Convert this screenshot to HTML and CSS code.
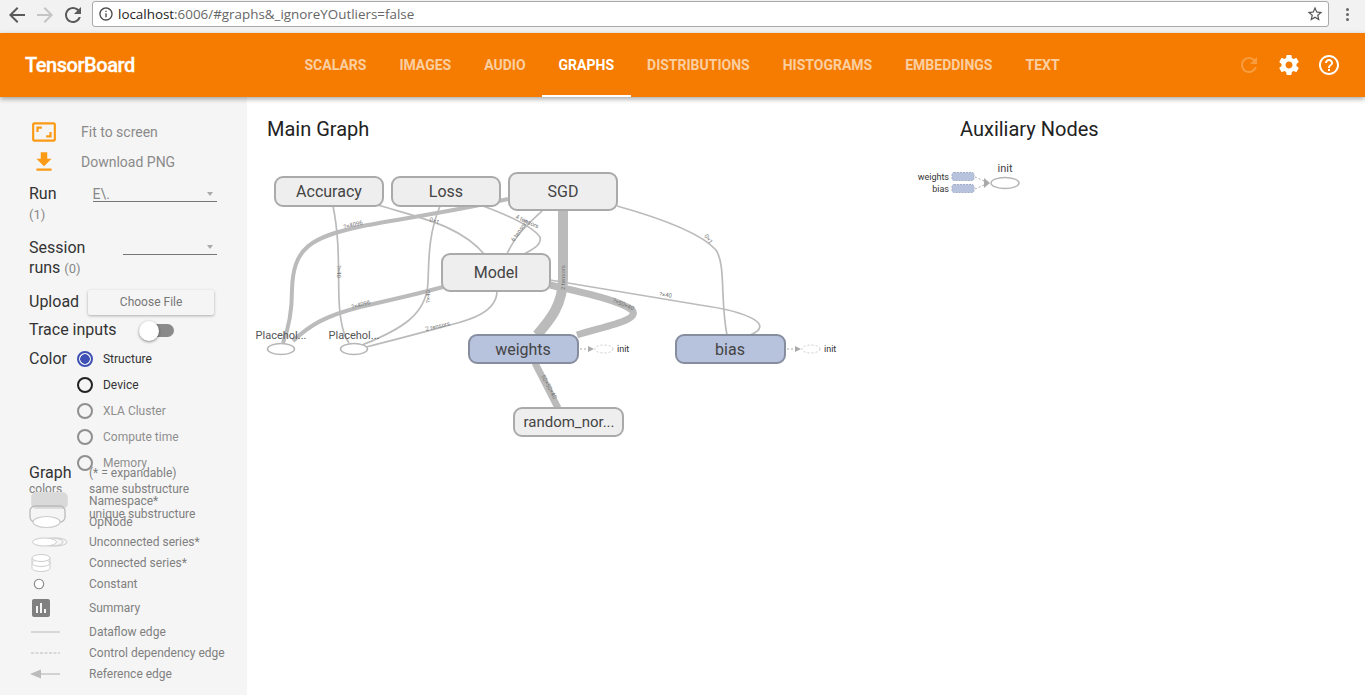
FILE: index.html
```html
<!DOCTYPE html>
<html lang="en">
<head>
  <meta charset="UTF-8" />
  <title>TensorBoard</title>
  <link rel="stylesheet" href="styles.css">
</head>
<body>

  <div class="chrome-bar">
    <svg class="chrome-icon" viewBox="0 0 24 24"><path d="M20 11H7.83l5.59-5.59L12 4l-8 8 8 8 1.41-1.41L7.83 13H20v-2z"/></svg>
    <svg class="chrome-icon faded" viewBox="0 0 24 24"><path d="M12 4l-1.41 1.41L16.17 11H4v2h12.17l-5.58 5.59L12 20l8-8z"/></svg>
    <svg class="chrome-icon" viewBox="0 0 24 24"><path d="M17.65 6.35C16.2 4.9 14.21 4 12 4c-4.42 0-7.99 3.58-7.99 8s3.57 8 7.99 8c3.73 0 6.84-2.55 7.73-6h-2.08c-.82 2.33-3.04 4-5.65 4-3.31 0-6-2.69-6-6s2.69-6 6-6c1.66 0 3.14.69 4.22 1.78L13 11h7V4l-2.35 2.35z"/></svg>
    <div class="address">
      <svg class="info-icon" viewBox="0 0 24 24"><path d="M11 17h2v-6h-2v6zm1-15C6.48 2 2 6.48 2 12s4.48 10 10 10 10-4.48 10-10S17.52 2 12 2zm0 18c-4.41 0-8-3.59-8-8s3.59-8 8-8 8 3.59 8 8-3.59 8-8 8zM11 9h2V7h-2v2z"/></svg>
      <span class="url"><b>localhost</b>:6006/#graphs&amp;_ignoreYOutliers=false</span>
      <svg class="star-icon" viewBox="0 0 24 24"><path d="M22 9.24l-7.19-.62L12 2 9.19 8.63 2 9.24l5.46 4.73L5.82 21 12 17.27 18.18 21l-1.63-7.03L22 9.24zM12 15.4l-3.76 2.27 1-4.28-3.32-2.88 4.38-.38L12 6.1l1.71 4.04 4.38.38-3.32 2.88 1 4.28L12 15.4z"/></svg>
    </div>
    <div class="menu-dots"><i></i><i></i><i></i></div>
  </div>

  <header class="toolbar">
    <div class="brand">TensorBoard</div>
    <nav class="tabs">
      <a>SCALARS</a>
      <a>IMAGES</a>
      <a>AUDIO</a>
      <a class="active">GRAPHS</a>
      <a>DISTRIBUTIONS</a>
      <a>HISTOGRAMS</a>
      <a>EMBEDDINGS</a>
      <a>TEXT</a>
    </nav>
    <div class="toolbar-icons">
      <svg class="faded" viewBox="0 0 24 24"><path d="M17.65 6.35C16.2 4.9 14.21 4 12 4c-4.42 0-7.99 3.58-7.99 8s3.57 8 7.99 8c3.73 0 6.84-2.55 7.73-6h-2.08c-.82 2.33-3.04 4-5.65 4-3.31 0-6-2.69-6-6s2.69-6 6-6c1.66 0 3.14.69 4.22 1.78L13 11h7V4l-2.35 2.35z"/></svg>
      <svg viewBox="0 0 24 24"><path d="M19.43 12.98c.04-.32.07-.64.07-.98s-.03-.66-.07-.98l2.11-1.65c.19-.15.24-.42.12-.64l-2-3.46c-.12-.22-.39-.3-.61-.22l-2.49 1c-.52-.4-1.08-.73-1.69-.98l-.38-2.65C14.46 2.18 14.25 2 14 2h-4c-.25 0-.46.18-.49.42l-.38 2.65c-.61.25-1.17.59-1.69.98l-2.49-1c-.23-.09-.49 0-.61.22l-2 3.46c-.13.22-.07.49.12.64l2.11 1.65c-.04.32-.07.65-.07.98s.03.66.07.98l-2.11 1.65c-.19.15-.24.42-.12.64l2 3.46c.12.22.39.3.61.22l2.49-1c.52.4 1.08.73 1.69.98l.38 2.65c.03.24.24.42.49.42h4c.25 0 .46-.18.49-.42l.38-2.65c.61-.25 1.17-.59 1.69-.98l2.49 1c.23.09.49 0 .61-.22l2-3.46c.12-.22.07-.49-.12-.64l-2.11-1.65zM12 15.5c-1.93 0-3.5-1.57-3.5-3.5s1.57-3.5 3.5-3.5 3.5 1.57 3.5 3.5-1.57 3.5-3.5 3.5z"/></svg>
      <svg viewBox="0 0 24 24"><path d="M11 18h2v-2h-2v2zm1-16C6.48 2 2 6.48 2 12s4.48 10 10 10 10-4.48 10-10S17.52 2 12 2zm0 18c-4.41 0-8-3.59-8-8s3.59-8 8-8 8 3.59 8 8-3.59 8-8 8zm0-14c-2.21 0-4 1.79-4 4h2c0-1.1.9-2 2-2s2 .9 2 2c0 2-3 1.75-3 5h2c0-2.25 3-2.5 3-5 0-2.21-1.79-4-4-4z"/></svg>
    </div>
  </header>

  <div class="content">
    <aside class="sidebar">
      <div class="action">
        <svg viewBox="0 0 24 24"><path d="M19 12h-2v3h-3v2h5v-5zM7 9h3V7H5v5h2V9zm14-6H3c-1.1 0-2 .9-2 2v14c0 1.1.9 2 2 2h18c1.1 0 2-.9 2-2V5c0-1.1-.9-2-2-2zm0 16.01H3V4.99h18v14.02z"/></svg>
        <span>Fit to screen</span>
      </div>
      <div class="action">
        <svg viewBox="0 0 24 24"><path d="M19 9h-4V3H9v6H5l7 7 7-7zM5 18v2h14v-2H5z"/></svg>
        <span>Download PNG</span>
      </div>

      <div class="field run-field">
        <div class="field-label">Run<br><small>(1)</small></div>
        <div class="select run-select">E\.<i class="caret"></i></div>
      </div>
      <div class="field session-field">
        <div class="field-label">Session<br>runs <small>(0)</small></div>
        <div class="select session-select"><i class="caret"></i></div>
      </div>
      <div class="field upload-field">
        <div class="field-label">Upload</div>
        <button class="file-btn">Choose File</button>
      </div>
      <div class="field trace-field">
        <div class="field-label">Trace inputs</div>
        <div class="toggle"><i></i></div>
      </div>

      <div class="color-field">
        <div class="field-label">Color</div>
        <div class="radios">
          <div class="radio checked"><i></i>Structure</div>
          <div class="radio dark"><i></i>Device</div>
          <div class="radio"><i></i>XLA Cluster</div>
          <div class="radio"><i></i>Compute time</div>
          <div class="radio"><i></i>Memory</div>
        </div>
      </div>

      <div class="key">
        <div class="key-row">
          <div class="key-head">Graph</div><span>(* = expandable)</span>
        </div>
        <div class="key-row gap-2">
          <div class="key-head small">colors</div><span>same substructure</span>
        </div>
        <div class="key-row gap-n2">
          <div class="key-icon"><svg width="60" height="20" viewBox="0 0 60 20"><rect x="2.5" y="1.5" width="36" height="16" rx="5" fill="#d9d9d9" stroke="#ddd"/></svg></div><span>Namespace*</span>
        </div>
        <div class="key-row gap-n1">
          <div class="key-icon"><svg width="60" height="20" viewBox="0 0 60 20"><rect x="1" y="2" width="35" height="16" rx="5" fill="none" stroke="#bbb" stroke-width="1.3"/></svg></div><span>unique substructure</span>
        </div>
        <div class="key-row gap-n6">
          <div class="key-icon"><svg width="60" height="16" viewBox="0 0 60 16"><ellipse cx="17.5" cy="8" rx="13.5" ry="5.5" fill="#fff" stroke="#ccc" stroke-width="1.2"/></svg></div><span>OpNode</span>
        </div>
        <div class="key-row gap-6">
          <div class="key-icon"><svg width="60" height="14" viewBox="0 0 60 14"><ellipse cx="27" cy="7" rx="11" ry="4" fill="#f5f5f5" stroke="#ccc"/><ellipse cx="23" cy="7" rx="11" ry="4" fill="#f5f5f5" stroke="#ccc"/><ellipse cx="15.5" cy="7" rx="12" ry="4" fill="#fff" stroke="#ccc"/></svg></div><span>Unconnected series*</span>
        </div>
        <div class="key-row gap-7">
          <div class="key-icon"><svg width="60" height="18" viewBox="0 0 60 18"><path d="M3 4v10c0 2 4 3.5 9 3.5s9-1.5 9-3.5V4" fill="#fff" stroke="#ccc"/><ellipse cx="12" cy="9" rx="9" ry="3.5" fill="#fff" stroke="#ccc"/><ellipse cx="12" cy="4" rx="9" ry="3.5" fill="#fff" stroke="#ccc"/></svg></div><span>Connected series*</span>
        </div>
        <div class="key-row gap-7">
          <div class="key-icon"><svg width="60" height="14" viewBox="0 0 60 14"><circle cx="10" cy="7" r="4.7" fill="#fff" stroke="#888" stroke-width="1.1"/></svg></div><span>Constant</span>
        </div>
        <div class="key-row gap-10">
          <div class="key-icon"><svg class="summary-icon" viewBox="3 3 18 18"><path d="M19 3H5c-1.1 0-2 .9-2 2v14c0 1.1.9 2 2 2h14c1.1 0 2-.9 2-2V5c0-1.1-.9-2-2-2zM9 17H7v-7h2v7zm4 0h-2V7h2v10zm4 0h-2v-4h2v4z"/></svg></div><span>Summary</span>
        </div>
        <div class="key-row gap-10">
          <div class="key-icon"><svg width="60" height="6" viewBox="0 0 60 6"><path d="M2 3h29" stroke="#bbb" stroke-width="1"/></svg></div><span>Dataflow edge</span>
        </div>
        <div class="key-row gap-7">
          <div class="key-icon"><svg width="60" height="6" viewBox="0 0 60 6"><path d="M2 3h29" stroke="#bbb" stroke-width="1" stroke-dasharray="3 1.5"/></svg></div><span>Control dependency edge</span>
        </div>
        <div class="key-row gap-7">
          <div class="key-icon"><svg width="60" height="10" viewBox="0 0 60 10"><path d="M10 5h21" stroke="#bbb" stroke-width="1.2"/><path d="M1 5l11-4.5v9z" fill="#bbb"/></svg></div><span>Reference edge</span>
        </div>
      </div>
    </aside>

    <main class="board">
      <svg class="graph" viewBox="247 97 1118 598">
        <text class="heading" x="267" y="136">Main Graph</text>
        <text class="heading" x="960" y="136">Auxiliary Nodes</text>

        <!-- edges -->
        <g class="edges">
          <path class="w4" d="M508 199C455 211 400 219 363 226C310 237 293 248 292 290C292 315 288 330 283 343"/>
          <path class="w4" d="M443 287C410 296 385 301 360 307C325 316 310 325 293 341"/>
          <path d="M333 206C340 240 338 270 339 300C340 320 343 335 349 343"/>
          <path d="M378 205C420 218 460 225 485 255"/>
          <path d="M440 206C428 235 429 260 428 282C427 315 400 330 362 345"/>
          <path d="M483 206C510 216 532 226 540 237C542 245 532 250 522 255"/>
          <path d="M543 210C530 222 515 235 507 254"/>
          <path d="M497 291C497 312 470 320 450 325C420 333 395 340 366 347"/>
          <path class="w10" d="M563 210V278C563 305 550 320 537 335"/>
          <path class="w7" d="M550 285C580 292 620 300 632 310C640 320 610 325 577 335"/>
          <path d="M550 280C600 288 650 297 700 305C750 312 775 325 750 335"/>
          <path d="M617 206C660 218 700 232 716 250C726 265 720 300 727 335"/>
          <path class="w7" d="M535 363L558 408"/>
        </g>

        <!-- small tensor shape labels sitting on the edges -->
        <g class="shapes">
          <text transform="translate(344 229) rotate(-14)">?×4096</text>
          <text transform="translate(337 265) rotate(90)">?×40</text>
          <text transform="translate(352 309) rotate(-15)">?×4096</text>
          <text transform="translate(430 303) rotate(-90)">?×40</text>
          <text transform="translate(429 221) rotate(20)">0×1</text>
          <text transform="translate(426 331) rotate(-13)">2 tensors</text>
          <text transform="translate(515 218) rotate(25)">4 tensors</text>
          <text transform="translate(514 242) rotate(-55)">6 tensors</text>
          <text transform="translate(565 290) rotate(-90)">2 tensors</text>
          <text transform="translate(612 302) rotate(22)">?×50×40</text>
          <text transform="translate(659 296) rotate(8)">?×40</text>
          <text transform="translate(704 236) rotate(55)">0×1</text>
          <text transform="translate(541 376) rotate(62)">50×50×40</text>
        </g>

        <!-- nodes -->
        <g class="node">
          <rect x="275" y="177" width="108" height="29" rx="8"/>
          <text x="329" y="197">Accuracy</text>
        </g>
        <g class="node">
          <rect x="392" y="177" width="108" height="29" rx="8"/>
          <text x="446" y="197">Loss</text>
        </g>
        <g class="node">
          <rect x="509" y="173" width="108" height="37" rx="8"/>
          <text x="563" y="197">SGD</text>
        </g>
        <g class="node">
          <rect x="442" y="254" width="108" height="37" rx="8"/>
          <text x="496" y="278">Model</text>
        </g>
        <g class="node blue">
          <rect x="469" y="335" width="109" height="28" rx="8"/>
          <text x="523" y="355">weights</text>
        </g>
        <g class="node blue">
          <rect x="676" y="335" width="109" height="28" rx="8"/>
          <text x="730" y="355">bias</text>
        </g>
        <g class="node narrow">
          <rect x="514" y="408" width="109" height="28" rx="8"/>
          <text x="569" y="427">random_nor...</text>
        </g>

        <!-- placeholders -->
        <g class="op">
          <ellipse cx="281" cy="349" rx="13.5" ry="5.5"/>
          <text x="281" y="339">Placehol...</text>
          <ellipse cx="354" cy="349" rx="13.5" ry="5.5"/>
          <text x="354" y="339">Placehol...</text>
        </g>

        <!-- init stubs next to the variables -->
        <g class="stub">
          <path d="M580 349h9"/><path class="tip" d="M588 346l6 3-6 3z"/>
          <ellipse cx="604" cy="349" rx="9" ry="4"/>
          <text x="617" y="352">init</text>
          <path d="M787 349h9"/><path class="tip" d="M795 346l6 3-6 3z"/>
          <ellipse cx="811" cy="349" rx="9" ry="4"/>
          <text x="824" y="352">init</text>
        </g>

        <!-- auxiliary nodes -->
        <g class="aux">
          <text x="949" y="180">weights</text>
          <text x="949" y="192">bias</text>
          <rect x="952" y="172.5" width="22" height="8" rx="2"/>
          <rect x="952" y="184.5" width="22" height="8" rx="2"/>
          <path class="link" d="M975 177l9 4M975 189l9-4"/>
          <path class="tip" d="M984 178l6 5-6 5z"/>
          <ellipse cx="1005" cy="183" rx="14" ry="5.5"/>
          <text class="aux-title" x="1005" y="172">init</text>
        </g>
      </svg>
    </main>
  </div>

</body>
</html>
```
FILE: styles.css
```css
* {
  box-sizing: border-box;
}

body {
  margin: 0;
  height: 695px;
  overflow: hidden;
  font-family: Roboto, 'Noto Sans', sans-serif;
  background: white;
  display: flex;
  flex-direction: column;
}

/* browser chrome */
.chrome-bar {
  height: 33px;
  flex: none;
  background: #f2f2f2;
  display: flex;
  align-items: flex-start;
  padding: 1px 0 0 5px;
}

.chrome-icon {
  width: 24px;
  height: 24px;
  margin: 2px 4px 0 0;
  fill: #5a5a5a;
}

.chrome-icon.faded {
  fill: #c4c4c4;
}

.address {
  width: 1237px;
  height: 26px;
  margin-left: 3px;
  background: white;
  border: 1px solid #a9a9a9;
  border-radius: 3px;
  display: flex;
  align-items: center;
  padding: 0 4px 0 5px;
}

.info-icon {
  width: 16px;
  height: 16px;
  fill: #4a4a4a;
}

.url {
  margin-left: 4px;
  font-family: 'Open Sans', sans-serif;
  font-size: 13.4px;
  color: #666;
  flex: 1;
}

.url b {
  font-weight: normal;
  color: #222;
}

.star-icon {
  width: 18px;
  height: 18px;
  fill: #555;
}

.menu-dots {
  margin: 7px 0 0 17px;
  display: flex;
  flex-direction: column;
  gap: 2px;
}

.menu-dots i {
  width: 3px;
  height: 3px;
  background: #666;
  border-radius: 50%;
}

/* orange toolbar */
.toolbar {
  height: 64px;
  flex: none;
  background: #f57c00;
  box-shadow: 0 2px 5px rgba(0, 0, 0, 0.35);
  display: flex;
  position: relative;
  z-index: 2;
  color: white;
}

.brand {
  width: 288px;
  padding-left: 25px;
  font-size: 20px;
  font-weight: 500;
  line-height: 65px;
  letter-spacing: -0.45px;
  -webkit-text-stroke: 0.3px white;
}

.tabs {
  display: flex;
  flex: 1;
}

.tabs a {
  padding: 0 16.5px;
  font-size: 14px;
  font-weight: 700;
  line-height: 65px;
  color: rgba(255, 255, 255, 0.65);
}

.tabs a.active {
  color: white;
  border-bottom: 2px solid white;
}

.toolbar-icons {
  display: flex;
  gap: 16px;
  align-items: center;
  padding-right: 24px;
}

.toolbar-icons svg {
  width: 24px;
  height: 24px;
  fill: white;
}

.toolbar-icons svg.faded {
  fill: rgba(255, 255, 255, 0.25);
}

/* left panel */
.content {
  flex: 1;
  display: flex;
  min-height: 0;
}

.sidebar {
  width: 247px;
  flex: none;
  background: #f5f5f5;
  padding: 20px 0 0 29px;
  font-size: 16px;
  color: #333;
}

.action {
  height: 30px;
  display: flex;
  align-items: center;
  font-size: 14px;
  color: #8a8a8a;
}

.action svg {
  width: 26px;
  height: 26px;
  margin: 0 24px 0 2px;
  fill: #fb9a14;
}

.field {
  display: flex;
}

.field-label {
  line-height: 20px;
  color: #333;
}

.field-label small {
  font-size: 13px;
  color: #888;
}

.run-field {
  height: 61px;
  padding-top: 7px;
}

.session-field {
  height: 47px;
}

.select {
  position: relative;
  height: 15px;
  margin-top: 3px;
  border-bottom: 1px solid #777;
  font-size: 14px;
  line-height: 14px;
  color: #888;
}

.run-select {
  width: 124px;
  margin-left: 36px;
}

.session-select {
  width: 94px;
  margin-left: 38px;
  margin-top: 2px;
}

/* dropdown arrow over the underline box */
.caret {
  position: absolute;
  right: 4px;
  top: 5px;
  border: 3.5px solid transparent;
  border-top: 4px solid #aaa;
}

.upload-field {
  height: 28px;
  margin-top: 3px;
  align-items: center;
}

.file-btn {
  width: 126px;
  height: 25px;
  margin-left: 9px;
  border: none;
  border-radius: 2px;
  background: #f5f5f5;
  box-shadow: 0 1px 3px rgba(0, 0, 0, 0.3);
  font-family: Roboto, sans-serif;
  font-size: 12px;
  color: #777;
}

.trace-field {
  height: 28px;
  align-items: center;
}

.toggle {
  position: relative;
  width: 24px;
  height: 13px;
  margin-left: 33px;
  border-radius: 7px;
  background: #8a8a8a;
}

/* knob hangs over the end of the track */
.toggle i {
  position: absolute;
  left: -11px;
  top: -3px;
  width: 20px;
  height: 20px;
  border-radius: 50%;
  background: white;
  box-shadow: 0 1px 3px rgba(0, 0, 0, 0.45);
}

.color-field {
  height: 122px;
  display: flex;
  line-height: 26px;
}

.color-field .field-label {
  line-height: 26px;
  margin-top: 2px;
}

.radios {
  margin-left: 10px;
  padding-top: 2px;
  font-size: 12px;
  color: #8f8f8f;
}

.radio {
  height: 26px;
  display: flex;
  align-items: center;
}

.radio i {
  width: 16px;
  height: 16px;
  margin-right: 10px;
  border: 2px solid #8f8f8f;
  border-radius: 50%;
}

.radio.dark {
  color: #333;
}

.radio.dark i {
  border-color: #222;
}

.radio.checked {
  color: #333;
}

.radio.checked i {
  border-color: #3f51b5;
  background: radial-gradient(circle, #3f51b5 0 4.5px, transparent 5px);
}

/* legend, rows deliberately run into each other like the original panel */
.key {
  font-size: 12px;
  color: #808080;
}

.key-row {
  height: 14px;
  display: flex;
  align-items: center;
  position: relative;
}

.key-head,
.key-icon {
  width: 60px;
  flex: none;
}

.key-head {
  margin-bottom: 2px;
  font-size: 16px;
  color: #333;
}

.key-head.small {
  margin-bottom: 0;
  font-size: 12px;
  color: #808080;
}

.key-icon {
  height: 14px;
  display: flex;
  align-items: center;
}

.key-icon svg {
  display: block;
  overflow: visible;
}

.summary-icon {
  width: 18px;
  height: 18px;
  margin-left: 3px;
  fill: #808080;
}

.gap-n6 { margin-top: -6px; }
.gap-n2 { margin-top: -2px; }
.gap-n1 { margin-top: -1px; }
.gap-2 { margin-top: 2px; }
.gap-6 { margin-top: 6px; }
.gap-7 { margin-top: 7px; }
.gap-10 { margin-top: 10px; }

/* graph canvas */
.board {
  flex: 1;
  min-width: 0;
}

.graph {
  display: block;
  width: 1118px;
  height: 598px;
}

.heading {
  font-size: 20px;
  fill: #222;
}

.edges path {
  fill: none;
  stroke: #bbb;
  stroke-width: 1.7;
}

.edges .w4 { stroke-width: 4; }
.edges .w7 { stroke-width: 7; }
.edges .w10 { stroke-width: 10; }

.shapes text {
  font-size: 6px;
  fill: #777;
}

.node rect {
  fill: #eee;
  stroke: #aaa;
  stroke-width: 2;
}

.node text {
  font-size: 16px;
  fill: #444;
  text-anchor: middle;
}

.node.narrow text {
  font-size: 15px;
}

.node.blue rect {
  fill: #b7c2dd;
  stroke: #868d9f;
}

.op ellipse {
  fill: white;
  stroke: #b5b5b5;
  stroke-width: 1.5;
}

.op text {
  font-size: 11px;
  fill: #555;
  text-anchor: middle;
}

.stub path {
  fill: none;
  stroke: #aaa;
  stroke-dasharray: 2 2;
}

.stub .tip,
.aux .tip {
  fill: #aaa;
  stroke: none;
}

.stub ellipse {
  fill: white;
  stroke: #ccc;
  stroke-dasharray: 2 2;
}

.stub text {
  font-size: 9px;
  fill: #333;
}

.aux text {
  font-size: 9px;
  fill: #333;
  text-anchor: end;
}

.aux .aux-title {
  font-size: 11px;
  text-anchor: middle;
  fill: #444;
}

.aux rect {
  fill: #b7c2dd;
  stroke: #a4aec8;
  stroke-dasharray: 2 1;
}

.aux .link {
  fill: none;
  stroke: #aaa;
  stroke-dasharray: 2 2;
}

.aux ellipse {
  fill: white;
  stroke: #b5b5b5;
  stroke-width: 1.5;
}
```
